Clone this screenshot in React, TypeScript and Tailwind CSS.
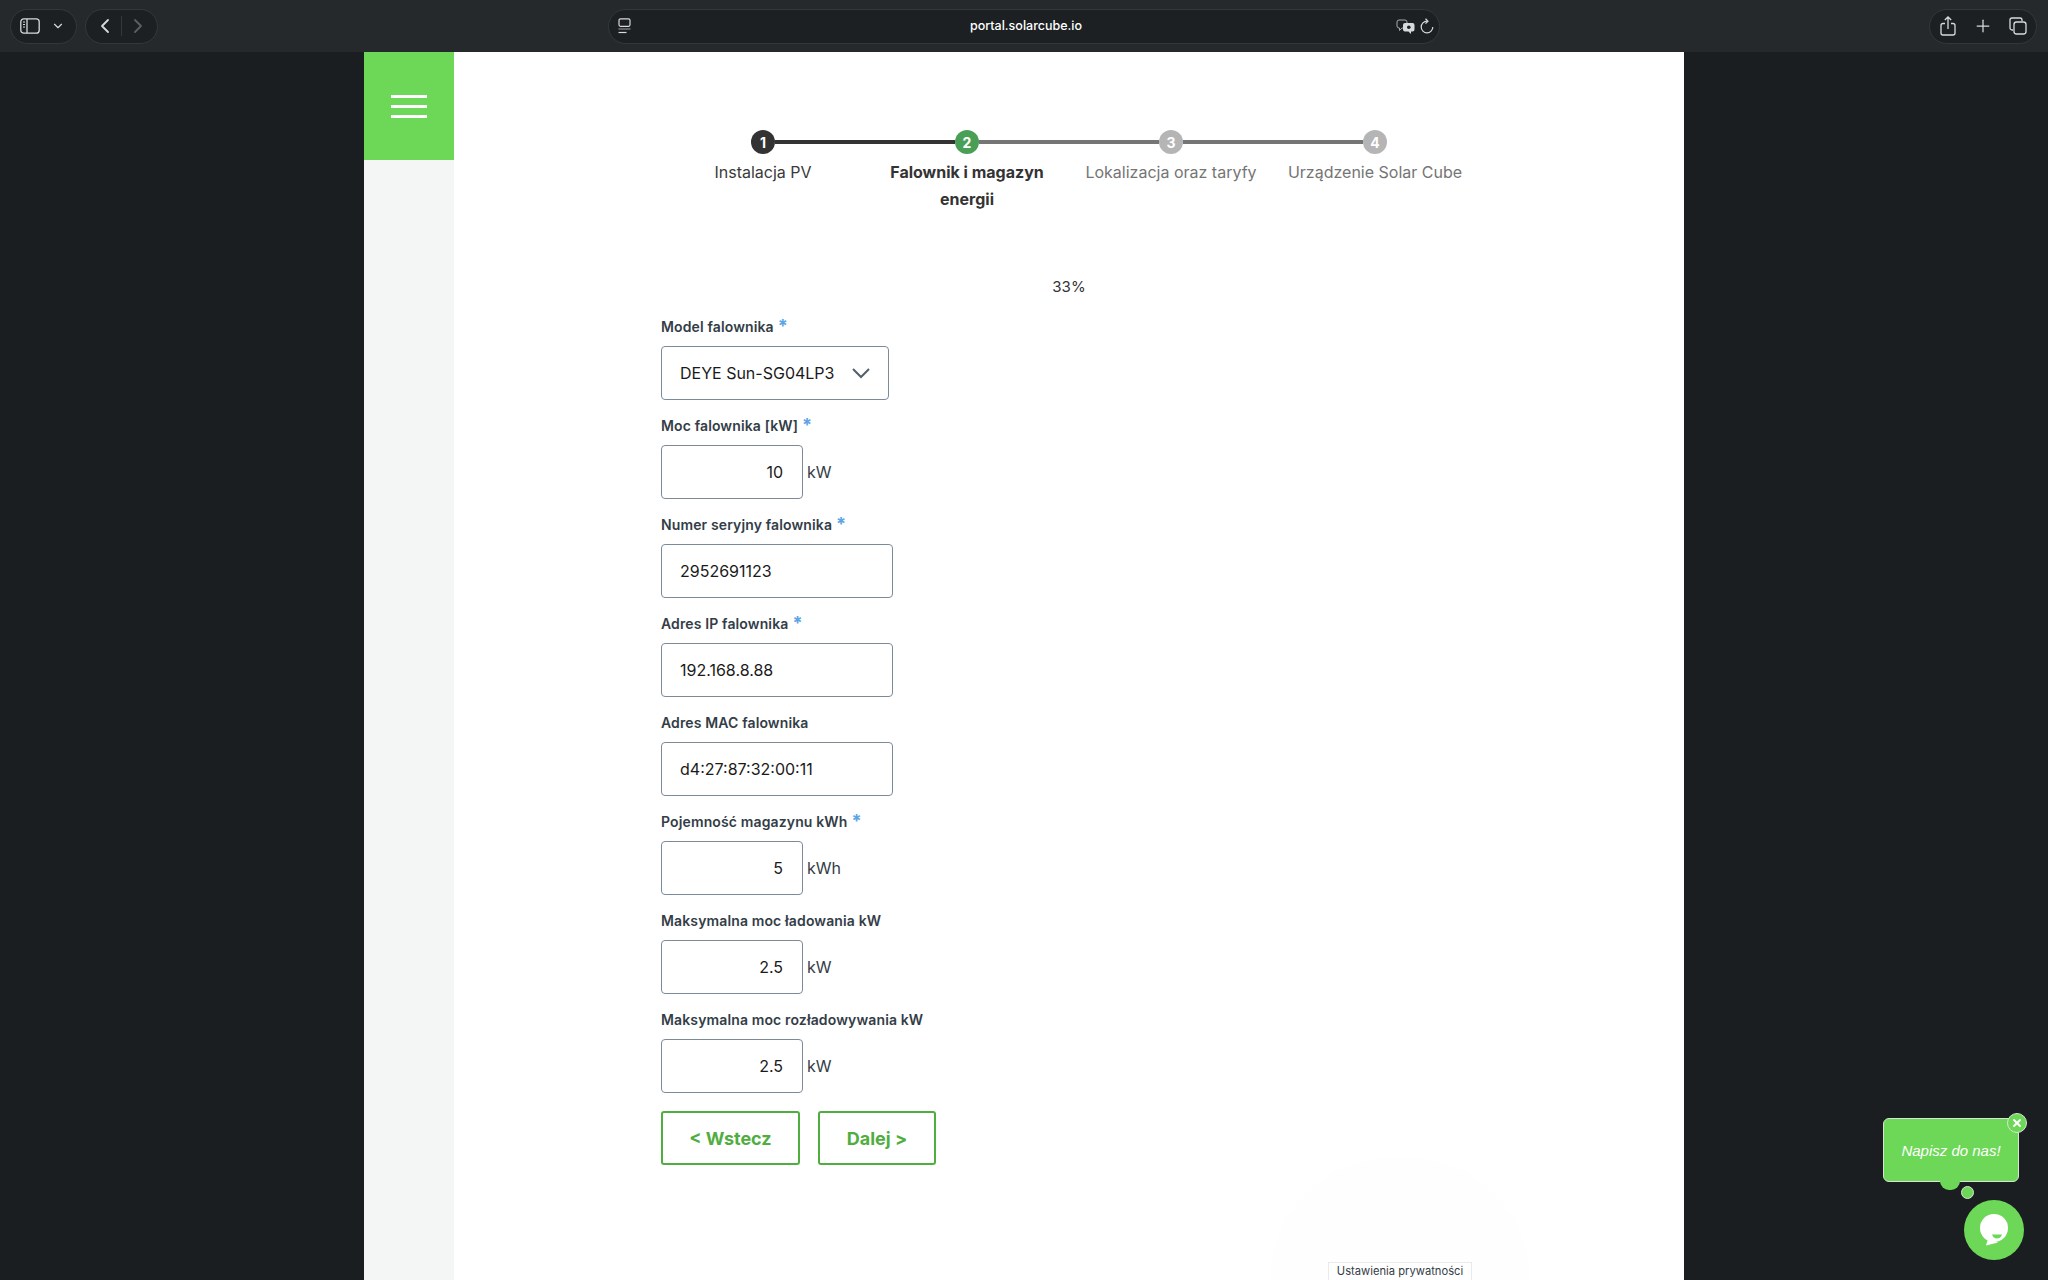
import React from "react";
import { ChevronDown, ChevronLeft, ChevronRight, Plus, X } from "lucide-react";

const steps = [
  { n: 1, label: "Instalacja PV", circle: "bg-[#333333]", text: "text-[#3a3a3a]", left: "bg-transparent", right: "bg-[#333333]" },
  { n: 2, label: "Falownik i magazyn energii", circle: "bg-[#4a9f57]", text: "text-[#333333] font-bold", left: "bg-[#333333]", right: "bg-[#757575]" },
  { n: 3, label: "Lokalizacja oraz taryfy", circle: "bg-[#b5b5b5]", text: "text-[#757575]", left: "bg-[#757575]", right: "bg-[#757575]" },
  { n: 4, label: "Urządzenie Solar Cube", circle: "bg-[#b5b5b5]", text: "text-[#757575]", left: "bg-[#757575]", right: "bg-transparent" },
];

const fields = [
  { label: "Moc falownika [kW]", required: true, value: "10", unit: "kW" },
  { label: "Numer seryjny falownika", required: true, value: "2952691123" },
  { label: "Adres IP falownika", required: true, value: "192.168.8.88" },
  { label: "Adres MAC falownika", required: false, value: "d4:27:87:32:00:11" },
  { label: "Pojemność magazynu kWh", required: true, value: "5", unit: "kWh" },
  { label: "Maksymalna moc ładowania kW", required: false, value: "2.5", unit: "kW" },
  { label: "Maksymalna moc rozładowywania kW", required: false, value: "2.5", unit: "kW" },
];

const FieldLabel: React.FC<{ label: string; required: boolean }> = ({ label, required }) => (
  <div className="h-5 mb-[9px] flex items-baseline text-[14px] leading-5 tracking-[0.13px] font-semibold text-[#333d47] whitespace-nowrap">
    {label}
    {required && <span className="text-[#5ba4e6] text-[18px] leading-none font-bold ml-1">*</span>}
  </div>
);

const Toolbar = () => (
  <div className="h-[52px] shrink-0 bg-[#25292c] flex items-center text-[#d8d9da]">
    {/* Left controls */}
    <div className="ml-[10px] w-[67px] h-[35px] rounded-full bg-[#1c2023] border border-[#33383b] flex items-center pl-[9px] gap-[11px]">
      <svg width="20" height="16" viewBox="0 0 20 16" fill="none" stroke="currentColor" strokeWidth="1.3">
        <rect x="0.8" y="0.8" width="18.4" height="14.4" rx="3" />
        <path d="M7 1v14" />
        <path d="M3 4h2M3 6.5h2M3 9h2" strokeWidth="1.2" />
      </svg>
      <ChevronDown size={14} strokeWidth={2} />
    </div>
    <div className="ml-[8px] w-[73px] h-[35px] rounded-full bg-[#1c2023] border border-[#33383b] flex items-center justify-between px-[7px]">
      <ChevronLeft size={24} strokeWidth={1.8} />
      <div className="w-px h-[20px] bg-[#33383b]" />
      <ChevronRight size={24} strokeWidth={1.8} className="text-[#5b5f62]" />
    </div>

    {/* Address bar */}
    <div className="ml-[450px] w-[832px] h-[35px] rounded-full bg-[#1c2023] border border-[#33383b] grid grid-cols-[1fr_auto_1fr] items-center pl-[9px] pr-[5px]">
      <svg width="13" height="16" viewBox="0 0 13 16" fill="none" stroke="currentColor" strokeWidth="1.2">
        <rect x="1" y="0.8" width="11" height="7.500" rx="1.500" />
        <path d="M0.500 11h12" stroke="#8a8d8f" />
        <path d="M0.500 14.500h8" />
      </svg>
      <span className="text-[12.500px] font-medium text-white">portal.solarcube.io</span>
      <div className="flex items-center justify-end gap-[5px]">
        <svg width="19" height="15" viewBox="0 0 19 15" fill="none">
          <path d="M3 1h6a2 2 0 0 1 2 2v4a2 2 0 0 1-2 2H6L3.500 11.500V9H3a2 2 0 0 1-2-2V3a2 2 0 0 1 2-2z" stroke="#a8aaac" strokeWidth="1" />
          <path d="M9 4h7.500a2 2 0 0 1 2 2v4.500a2 2 0 0 1-2 2H15V15l-2.500-2.500H9a2 2 0 0 1-2-2V6a2 2 0 0 1 2-2z" fill="currentColor" />
          <circle cx="12.800" cy="8.200" r="1.800" fill="#1c2023" />
        </svg>
        <svg width="14" height="16" viewBox="0 0 14 16" fill="none" stroke="currentColor" strokeWidth="1.200">
          <path d="M12.800 9a5.800 5.800 0 1 1-5.800-5.800" />
          <path d="M5.500 0.800L8 3.200 5.500 5.600" />
        </svg>
      </div>
    </div>

    {/* Right controls */}
    <div className="ml-auto mr-[11px] w-[108px] h-[35px] rounded-full bg-[#1c2023] border border-[#33383b] flex items-center justify-between pl-[10px] pr-[9px]">
      <svg width="16" height="20" viewBox="0 0 16 20" fill="none" stroke="currentColor" strokeWidth="1.3">
        <path d="M5 7.500H3a2 2 0 0 0-2 2V17a2 2 0 0 0 2 2h10a2 2 0 0 0 2-2V9.500a2 2 0 0 0-2-2h-2" />
        <path d="M8 13V1M4.800 4L8 1l3.200 3" />
      </svg>
      <Plus size={20} strokeWidth={1.5} />
      <svg width="18" height="18" viewBox="0 0 18 18" fill="none" stroke="currentColor" strokeWidth="1.3">
        <path d="M4 13H3a2 2 0 0 1-2-2V3a2 2 0 0 1 2-2h8a2 2 0 0 1 2 2v1" />
        <rect x="5" y="5" width="12" height="12" rx="2.500" />
      </svg>
    </div>
  </div>
);

const Stepper = () => (
  <div className="ml-[207px] w-[816px] grid grid-cols-4">
    {steps.map((s) => (
      <div key={s.n} className="flex flex-col items-center">
        <div className="w-full flex items-center">
          <div className={`flex-1 h-[4px] ${s.left}`} />
          <div className={`w-6 h-6 rounded-full shrink-0 flex items-center justify-center text-white text-[14px] font-bold ${s.circle}`}>
            {s.n}
          </div>
          <div className={`flex-1 h-[4px] ${s.right}`} />
        </div>
        <div className={`mt-[5px] text-center text-[16px] leading-[27px] px-2 ${s.text}`}>
          {s.label}
        </div>
      </div>
    ))}
  </div>
);

const ChatWidget = () => (
  <div className="absolute left-[1883px] top-[1118px] font-['Liberation_Sans',sans-serif]">
    <div className="relative w-[136px] h-[64px] rounded-[6px] bg-[#6dd857] border border-[#d6e6d2] flex items-center justify-center pt-[2px] text-white italic text-[15px]">
      Napisz do nas!
      <div className="absolute -right-[9px] -top-[6px] w-5 h-5 rounded-full bg-[#6dd857] border border-[#d6e6d2] flex items-center justify-center">
        <X size={12} strokeWidth={4} className="text-white" />
      </div>
      <div className="absolute left-[56px] top-[62px] w-5 h-[9px] rounded-b-full bg-[#6dd857]" />
      <div className="absolute left-[77px] top-[67px] w-[13px] h-[13px] rounded-full bg-[#6dd857] border border-[#d6e6d2]" />
    </div>
    <div className="absolute left-[81px] top-[82px] w-[60px] h-[60px] rounded-full bg-[#6dd857] flex items-center justify-center">
      <svg width="30" height="32" viewBox="0 0 30 32">
        <circle cx="15" cy="14" r="14" fill="#fff" />
        <path d="M9 25l-2 6.500 12-3z" fill="#fff" />
        <path d="M13 20.500h10c-1 3-3 4-5 4s-4-1-5-4z" fill="#6dd857" />
      </svg>
    </div>
  </div>
);

export default function App() {
  return (
    <div className="relative w-[2048px] h-[1280px] overflow-hidden flex flex-col bg-[#1a1e21] font-['Inter',sans-serif]">
      <Toolbar />
      <div className="flex-1 min-h-0 flex ml-[364px] w-[1320px]">
        {/* Sidebar */}
        <aside className="w-[90px] shrink-0 bg-[#f4f6f5]">
          <div className="h-[108px] bg-[#6dd857] flex flex-col items-center justify-center gap-[7px]">
            <div className="w-9 h-[3px] bg-white" />
            <div className="w-9 h-[3px] bg-white" />
            <div className="w-9 h-[3px] bg-white" />
          </div>
        </aside>

        {/* Main content */}
        <main className="relative flex-1 bg-white pt-[78px]">
          <Stepper />
          <div className="absolute left-[207px] top-[223px] w-[816px] text-center text-[15px] leading-6 text-[#333333]">33%</div>

          <div className="absolute left-[207px] top-[265px] w-[400px]">
            <div className="mb-4">
              <FieldLabel label="Model falownika" required />
              <div className="w-[228px] h-[54px] rounded-[4px] border border-[#7c8b9a] flex items-center justify-between pl-[18px] pr-[18px] text-[16px] leading-[22px] text-[#1a1a1a]">
                <span className="whitespace-nowrap">DEYE Sun-SG04LP3</span>
                <svg width="18" height="11" viewBox="0 0 18 11" fill="none" stroke="#52606d" strokeWidth="2">
                  <path d="M1 1l8 8 8-8" />
                </svg>
              </div>
            </div>

            {fields.map((f) => (
              <div key={f.label} className="mb-4">
                <FieldLabel label={f.label} required={f.required} />
                <div className="flex items-center">
                  {f.unit ? (
                    <>
                      <div className="w-[142px] h-[54px] rounded-[4px] border border-[#7c8b9a] flex items-center justify-end pr-[19px] text-[16px] leading-[22px] text-[#1a1a1a]">
                        {f.value}
                      </div>
                      <span className="ml-1 text-[16px] leading-[22px] text-[#333d47]">{f.unit}</span>
                    </>
                  ) : (
                    <div className="w-[232px] h-[54px] rounded-[4px] border border-[#7c8b9a] flex items-center pl-[18px] text-[16px] leading-[22px] text-[#1a1a1a]">
                      {f.value}
                    </div>
                  )}
                </div>
              </div>
            ))}

            <div className="flex gap-[18px] mt-[18px]">
              <button className="w-[139px] h-[54px] rounded-[3px] border-2 border-[#4fae3f] text-[#4fae3f] text-[18px] font-bold">
                &lt; Wstecz
              </button>
              <button className="w-[118px] h-[54px] rounded-[3px] border-2 border-[#4fae3f] text-[#4fae3f] text-[18px] font-bold">
                Dalej &gt;
              </button>
            </div>
          </div>

          {/* Faint glow behind the privacy tab */}
          <div className="absolute left-[816px] bottom-0 w-[260px] h-[122px] rounded-t-full bg-[#fefefe]" />

          {/* Privacy tab */}
          <div className="absolute left-[874px] bottom-0 w-[144px] h-[18px] bg-white border border-b-0 border-[#e8eaee] text-[11.200px] leading-[17px] text-center text-[#333d47] whitespace-nowrap">
            Ustawienia prywatności
          </div>
        </main>
      </div>
      <ChatWidget />
    </div>
  );
}
